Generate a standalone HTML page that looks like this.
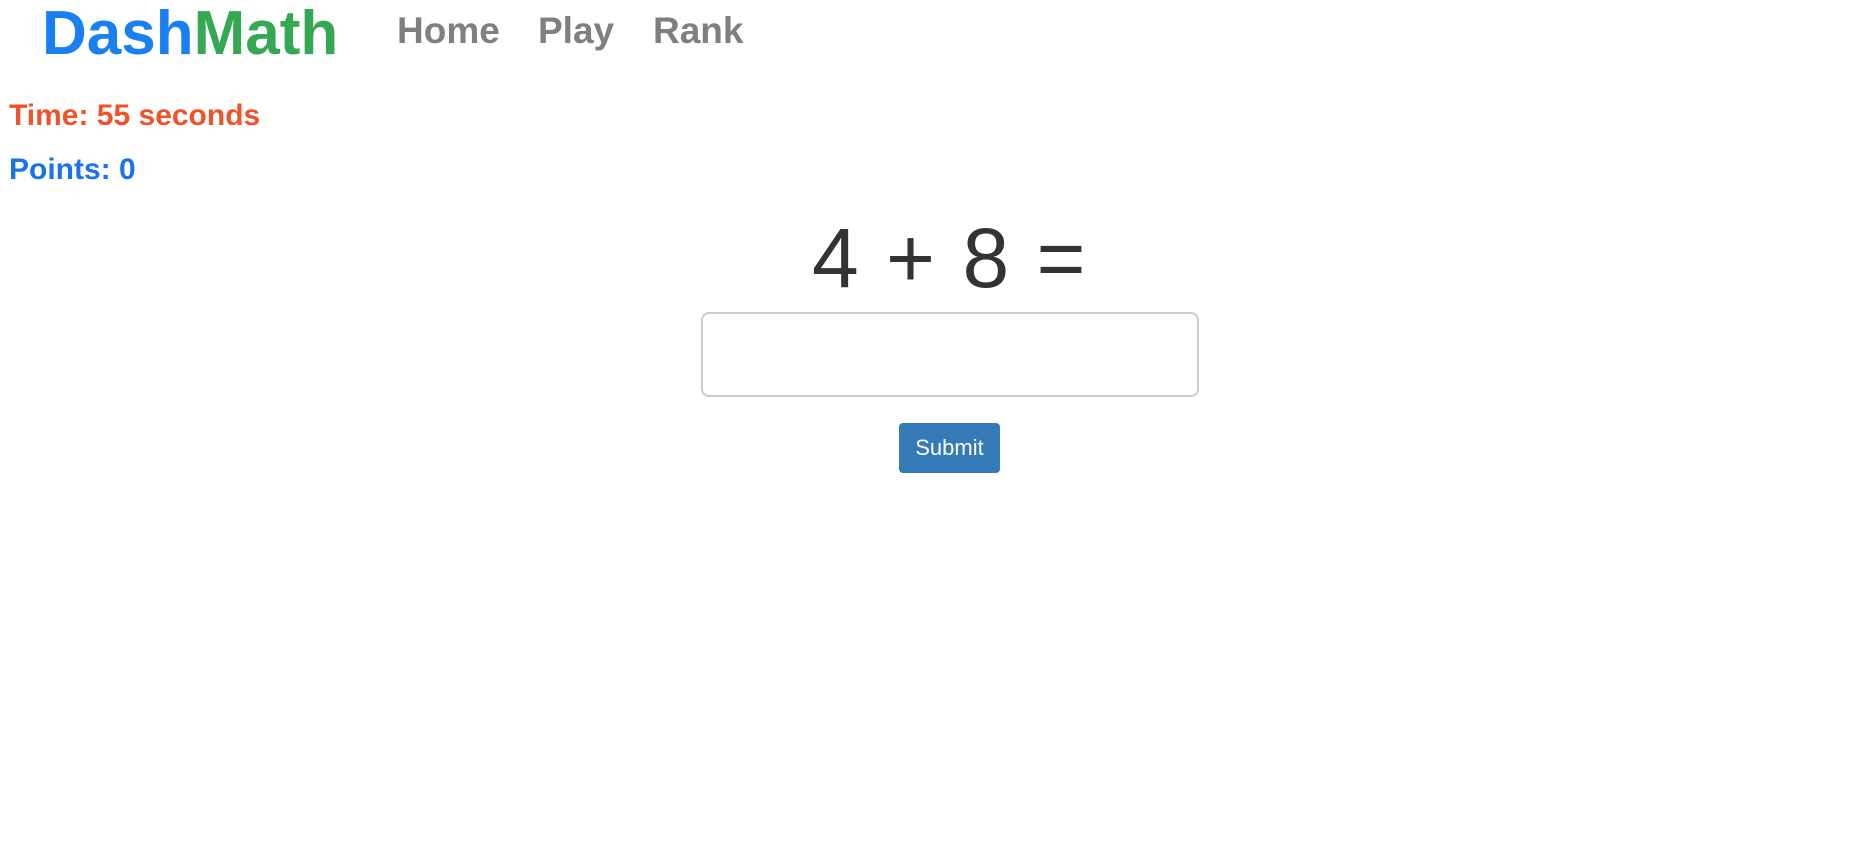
<!DOCTYPE html>
<html><head><meta charset="utf-8"><style>
body{margin:0;width:1854px;height:850px;background:#fff;font-family:"Liberation Sans",Arial,sans-serif;position:relative;overflow:hidden}
.a{position:absolute;white-space:nowrap;line-height:1}
</style></head><body>
<div class="a" style="left:42px;top:3px;font-size:62px;font-weight:bold"><span style="color:#1a7ff0">Dash</span><span style="color:#34a853">Math</span></div>
<div class="a" style="left:397px;top:12px;font-size:37px;font-weight:bold;color:#7f7f7f">Home</div>
<div class="a" style="left:538px;top:12px;font-size:37px;font-weight:bold;color:#7f7f7f">Play</div>
<div class="a" style="left:653px;top:12px;font-size:37px;font-weight:bold;color:#7f7f7f">Rank</div>
<div class="a" style="left:9px;top:101px;font-size:30px;font-weight:bold;color:#f0522a">Time: 55 seconds</div>
<div class="a" style="left:9px;top:155px;font-size:30px;font-weight:bold;color:#1a73e8">Points: 0</div>
<div class="a" style="left:812px;top:216px;font-size:84px;word-spacing:4px;color:#333">4 + 8 =</div>
<div class="a" style="left:701px;top:312px;width:494px;height:81px;border:2px solid #ccc;border-radius:8px"></div>
<div class="a" style="left:899px;top:423px;width:101px;height:50px;background:#337ab7;border-radius:4px;color:#fff;font-size:22px;line-height:50px;text-align:center">Submit</div>
</body></html>
